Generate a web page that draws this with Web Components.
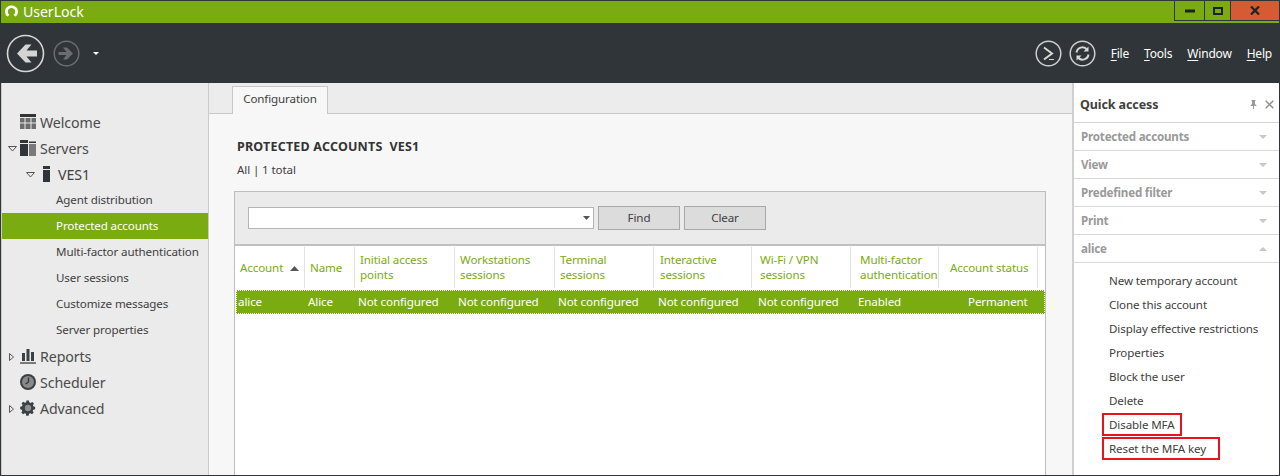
<!DOCTYPE html>
<html>
<head>
<meta charset="utf-8">
<title>UserLock</title>
<style>
  html, body { margin: 0; height: 476px; overflow: hidden; }
  body { font-family: "Noto Sans", "Open Sans", sans-serif; font-size: 11.6px; letter-spacing: -0.12px; color: #333; }
</style>
</head>
<body>
<ul-app>
  <ul-titlebar slot="top"></ul-titlebar>
  <ul-toolbar slot="top"></ul-toolbar>
  <ul-sidebar slot="left">
    <ul-node label="Welcome" depth="0" icon="welcome"></ul-node>
    <ul-node label="Servers" depth="0" icon="servers" arrow="open"></ul-node>
    <ul-node label="VES1" depth="1" icon="server" arrow="open"></ul-node>
    <ul-node label="Agent distribution" depth="2"></ul-node>
    <ul-node label="Protected accounts" depth="2" selected></ul-node>
    <ul-node label="Multi-factor authentication" depth="2"></ul-node>
    <ul-node label="User sessions" depth="2"></ul-node>
    <ul-node label="Customize messages" depth="2"></ul-node>
    <ul-node label="Server properties" depth="2"></ul-node>
    <ul-node label="Reports" depth="0" icon="reports" arrow="closed"></ul-node>
    <ul-node label="Scheduler" depth="0" icon="scheduler"></ul-node>
    <ul-node label="Advanced" depth="0" icon="advanced" arrow="closed"></ul-node>
  </ul-sidebar>
  <ul-main slot="main"></ul-main>
  <ul-quick slot="right">
    <ul-section label="Protected accounts"></ul-section>
    <ul-section label="View"></ul-section>
    <ul-section label="Predefined filter"></ul-section>
    <ul-section label="Print"></ul-section>
    <ul-section label="alice" open></ul-section>
    <ul-actions>
      <ul-action>New temporary account</ul-action>
      <ul-action>Clone this account</ul-action>
      <ul-action>Display effective restrictions</ul-action>
      <ul-action>Properties</ul-action>
      <ul-action>Block the user</ul-action>
      <ul-action>Delete</ul-action>
      <ul-action marked>Disable MFA</ul-action>
      <ul-action marked wide>Reset the MFA key</ul-action>
    </ul-actions>
  </ul-quick>
</ul-app>

<script>
const GREEN = '#7aab10';
const DARK = '#2f3538';

class Base extends HTMLElement {
    constructor() {
        super();
        this.attachShadow({ mode: 'open' });
    }
}

class UlApp extends Base {
    connectedCallback() {
        this.shadowRoot.innerHTML = `
            <style>
                :host { display: flex; flex-direction: column; width: 1280px; height: 476px; box-sizing: border-box;
                        border: 1px solid ${DARK}; background: #ebebeb; }
                .body { flex: 1; display: flex; min-height: 0; }
            </style>
            <slot name="top"></slot>
            <div class="body">
                <slot name="left"></slot>
                <slot name="main"></slot>
                <slot name="right"></slot>
            </div>`;
    }
}

class UlTitlebar extends Base {
    connectedCallback() {
        this.shadowRoot.innerHTML = `
            <style>
                :host { display: flex; height: 22px; background: ${GREEN}; color: #fff; align-items: flex-start; flex: none; }
                .logo { margin: 4px 5px 0 4px; width: 13px; height: 12px; display: block; }
                .name { font-size: 14.2px; letter-spacing: -0.1px; line-height: 21px; flex: 1; }
                .btns { display: flex; height: 19px; border: solid ${DARK}; border-width: 0 0 1px 1px; }
                .btn { display: flex; align-items: center; justify-content: center; height: 19px; box-sizing: border-box; }
                .min { width: 30px; border-right: 1px solid ${DARK}; }
                .max { width: 26px; border-right: 1px solid ${DARK}; }
                .close { width: 48px; background: #d65a33; }
            </style>
            <svg class="logo" viewBox="0 0 12 12" preserveAspectRatio="none"><path d="M2.400 11.600C.9 10.500 0 8.700 0 6.500 0 2.900 2.600.4 6 .4s6 2.500 6 6.100c0 2.200-.9 4-2.400 5.100L7.800 9.700c1-.6 1.600-1.800 1.600-3.200C9.400 4.500 7.900 3.100 6 3.100S2.600 4.500 2.600 6.500c0 1.400.6 2.600 1.600 3.200z" fill="#fff"/></svg>
            <div class="name">UserLock</div>
            <div class="btns">
                <div class="btn min"><svg width="10" height="4"><rect width="10" height="3" y="0.500" fill="#1d2224"/></svg></div>
                <div class="btn max"><svg width="10" height="8"><rect x="1" y="1" width="8" height="6" fill="none" stroke="#1d2224" stroke-width="2"/></svg></div>
                <div class="btn close"><svg width="10" height="9"><path d="M1 .5l8 8M9 .5l-8 8" stroke="#1d2224" stroke-width="2.200" fill="none"/></svg></div>
            </div>`;
    }
}

class UlToolbar extends Base {
    connectedCallback() {
        this.shadowRoot.innerHTML = `
            <style>
                :host { display: flex; align-items: center; height: 60px; background: ${DARK}; color: #fff; flex: none; }
                svg { display: block; flex: none; }
                .back { margin-left: 5px; }
                .fwd { margin-left: 8px; }
                .drop { margin-left: 13px; }
                .spacer { flex: 1; }
                .ps { margin-right: 7px; }
                .menu { display: flex; margin-left: 15px; font-size: 12px; letter-spacing: -0.2px; gap: 15px; padding-right: 7px; }
                u { text-underline-offset: 2px; }
            </style>
            <svg class="back" width="39" height="39" viewBox="0 0 39 39">
                <circle cx="19.500" cy="19.500" r="18" fill="none" stroke="#d8d8d8" stroke-width="1.600"/>
                <path d="M31 16.500H20.500l5-6h-6l-8.500 9 8.500 9h6l-5-6H31z" fill="#d4d4d4"/>
            </svg>
            <svg class="fwd" width="27" height="27" viewBox="0 0 27 27">
                <circle cx="13.500" cy="13.500" r="12.300" fill="none" stroke="#6a6e70" stroke-width="1.500"/>
                <path d="M5.500 12h8l-3.500-4.500h4l6 6-6 6h-4l3.500-4.500h-8z" fill="#6a6e70"/>
            </svg>
            <svg class="drop" width="6" height="3"><path d="M0 0h6L3 3z" fill="#fff"/></svg>
            <div class="spacer"></div>
            <svg class="ps" width="27" height="27" viewBox="0 0 27 27">
                <circle cx="13.500" cy="13.500" r="12.300" fill="none" stroke="#d0d0d0" stroke-width="1.500"/>
                <path d="M9 7.500l8 6-8 6" fill="none" stroke="#d8d8d8" stroke-width="2"/>
                <path d="M14 19.500h5" stroke="#d8d8d8" stroke-width="1"/>
            </svg>
            <svg width="27" height="27" viewBox="0 0 27 27">
                <circle cx="13.500" cy="13.500" r="12.300" fill="none" stroke="#d0d0d0" stroke-width="1.500"/>
                <path d="M7.500 12.500a6 6 0 0 1 10.500-3M19.500 14.500a6 6 0 0 1-10.500 3" fill="none" stroke="#d8d8d8" stroke-width="2"/>
                <path d="M19.500 6.500v5h-5zM7.500 20.500v-5h5z" fill="#d8d8d8"/>
            </svg>
            <div class="menu">
                <span><u>F</u>ile</span><span><u>T</u>ools</span><span><u>W</u>indow</span><span><u>H</u>elp</span>
            </div>`;
    }
}

const NODE_ICONS = {
    welcome: '<path d="M0 0h16v3H0zM0 4h4.500v4.500H0zM5.500 4h5v4.500h-5zM11.500 4H16v4.500h-4.500zM0 9.500h4.500V15H0zM5.500 9.500h5V15h-5zM11.500 9.500H16V15h-4.500z" fill="#6d6d6d"/><path d="M0 0h16v3H0z" fill="#2f3538"/>',
    servers: '<path d="M0 0h8v16H0z" fill="#2f3538"/><path d="M9 4h7v12H9z" fill="#7a7a7a"/><path d="M9 1.500h7v1.500H9z" fill="#2f3538"/><path d="M0 3h8v1H0z" fill="#ebebeb"/>',
    server: '<path d="M5 0h7v16H5z" fill="#2f3538"/><path d="M5 3h7v1H5z" fill="#ebebeb"/>',
    reports: '<path d="M2 5h3v8H2zM6.500 1h3v12h-3zM11 4h3v9h-3z" fill="#3a4043"/><path d="M0 14h16v2H0z" fill="#7a7a7a"/>',
    scheduler: '<circle cx="8" cy="8" r="8" fill="#3a4043"/><circle cx="8" cy="8" r="6" fill="#8a8a8a"/><path d="M8.500 3.500v4.500l-3 2" fill="none" stroke="#2f3538" stroke-width="1.300"/>',
    advanced: '<path d="M6.500 0h3l.5 2.200 1.700.7 1.900-1.200 2 2-1.200 1.900.7 1.700L17 7.500v3l-2.200.5-.7 1.700 1.200 1.900-2 2-1.900-1.200-1.700.7-.5 2.200h-3L6 16.100l-1.700-.7-1.900 1.200-2-2 1.200-1.900-.7-1.700L-1 10.500v-3l2.200-.5.700-1.700L.7 3.400l2-2 1.900 1.200L6.300 2z" transform="translate(1 .5) scale(.83)" fill="#3a4043"/><circle cx="8" cy="8" r="3.200" fill="#8f8f8f"/>'
};

class UlSidebar extends Base {
    connectedCallback() {
        this.shadowRoot.innerHTML = `
            <style>
                :host { display: block; width: 206px; flex: none; background: #ebebeb;
                        border-left: 1px solid #ccc; border-right: 1px solid #ccc; padding-top: 26px; }
            </style>
            <slot></slot>`;
    }
}

class UlNode extends Base {
    connectedCallback() {
        const depth = Number(this.getAttribute('depth'));
        const icon = this.getAttribute('icon');
        const arrow = this.getAttribute('arrow');
        const arrowSvg = arrow === 'open'
            ? '<path d="M.5 .5h8L4.500 5z" fill="none" stroke="#555"/>'
            : '<path d="M.5 .5v7L4.500 4z" fill="none" stroke="#555"/>';
        const iconEl = icon ? `<svg class="icon" width="17" height="16" viewBox="0 0 17 16">${NODE_ICONS[icon]}</svg>` : '';
        const arrowEl = arrow ? `<svg class="arrow ${arrow}" width="9" height="9">${arrowSvg}</svg>` : '';
        this.shadowRoot.innerHTML = `
            <style>
                :host { display: flex; align-items: center; height: 26px; color: #404040; }
                :host([selected]) { background: ${GREEN}; color: #fff; }
                .box { position: relative; display: flex; align-items: center; height: 100%; box-sizing: border-box; }
                .arrow { position: absolute; left: var(--ax); }
                .arrow.open { top: 11px; }
                .arrow.closed { top: 10px; left: 7px; }
                .icon { display: block; margin-right: 3px; flex: none; }
                .l0 { padding-left: 18px; font-size: 14.2px; letter-spacing: -0.1px; color: #4a4a4a; --ax: 6px; }
                .l1 { padding-left: 36px; font-size: 14.2px; letter-spacing: -0.1px; --ax: 24px; }
                .l1 .icon { margin-right: 3px; }
                .l2 { padding: 0 0 2px 54px; }
            </style>
            <div class="box l${depth}">${arrowEl}${iconEl}<span>${this.getAttribute('label')}</span></div>`;
    }
}

class UlMain extends Base {
    connectedCallback() {
        this.shadowRoot.innerHTML = `
            <style>
                :host { display: flex; flex-direction: column; flex: 1; min-width: 0; background: #f7f7f7; }
                .tabs { height: 31px; box-sizing: border-box; background: #ececec; border-bottom: 1px solid #c8c8c8; padding: 3px 0 0 23px; display: flex; flex: none; }
                .tab { width: 96px; height: 28px; box-sizing: border-box; border: 1px solid #c8c8c8; border-bottom: none; background: #f7f7f7;
                       line-height: 23px; text-align: center; color: #404040; }
                .content { flex: 1; display: flex; flex-direction: column; padding: 23px 26px 0 25px; min-height: 0; }
                h1 { margin: 0 0 0 3px; font-size: 12.5px; letter-spacing: 0.2px; font-weight: 700; line-height: 20px; color: #333; white-space: pre; }
                .count { margin: 3px 0 0 3px; line-height: 20px; color: #404040; }
            </style>
            <div class="tabs"><div class="tab">Configuration</div></div>
            <div class="content">
                <h1>PROTECTED ACCOUNTS  VES1</h1>
                <div class="count">All | 1 total</div>
                <ul-grid></ul-grid>
            </div>`;
    }
}

// title, value, header width, header text inset, row width
const COLUMNS = [
    ['Account', 'alice', 70, 5, 70],
    ['Name', 'Alice', 50, 5, 50],
    ['Initial access<br>points', 'Not configured', 100, 5, 100],
    ['Workstations<br>sessions', 'Not configured', 100, 5, 100],
    ['Terminal<br>sessions', 'Not configured', 99, 5, 100],
    ['Interactive<br>sessions', 'Not configured', 98, 6, 100],
    ['Wi-Fi / VPN<br>sessions', 'Not configured', 99, 8, 100],
    ['Multi-factor<br>authentication', 'Enabled', 88, 9, 110],
    ['Account status', 'Permanent', 99, 11, 99]
];

class UlGrid extends Base {
    connectedCallback() {
        const headTpl = COLUMNS.map(c => c[2] + 'px').join(' ');
        const rowTpl = COLUMNS.map(c => c[4] + 'px').join(' ');
        const heads = COLUMNS.map((c, i) => `<div class="th" style="padding-left:${c[3]}px">${c[0]}${i === 0 ? '<svg width="9" height="5"><path d="M0 5h9L4.500 0z" fill="#555"/></svg>' : ''}</div>`).join('');
        const cells = COLUMNS.map(c => `<div class="td">${c[1]}</div>`).join('');
        this.shadowRoot.innerHTML = `
            <style>
                :host { display: flex; flex-direction: column; flex: 1; margin-top: 11px; border: 1px solid #bdbdbd; border-bottom: none; background: #fff; min-height: 0; }
                .filter { height: 54px; box-sizing: border-box; background: #ebebeb; border-bottom: 2px solid #c0c0c0; padding: 15px 0 0 13px; display: flex; flex: none; }
                .combo { width: 346px; height: 22px; box-sizing: border-box; border: 1px solid #b5b5b5; background: #fff; display: flex; justify-content: flex-end; align-items: center; padding-right: 3px; }
                .btn { width: 82px; height: 24px; margin: -1px 0 0 4px; box-sizing: border-box; border: 1px solid #a8a8a8; background: #dcdcdc; line-height: 21px; text-align: center; color: #404040; }
                .head, .row { display: grid; }
                .head { height: 44px; grid-template-columns: ${headTpl}; }
                .th { border-right: 1px solid #e2e2e2; margin: 1px 0 2px; padding-top: 5px; height: 41px; box-sizing: border-box; color: #7aab10; line-height: 15px; white-space: nowrap; }
                .th:nth-child(1), .th:nth-child(2), .th:nth-child(9) { padding-top: 13px; }
                .th svg { margin: 0 0 1px 7px; }
                .row { height: 24px; grid-template-columns: ${rowTpl}; background: ${GREEN}; color: #fff; margin-left: 1px; outline: 1px dotted #fff; outline-offset: -1px; }
                .td { padding-left: 2px; line-height: 23px; white-space: nowrap; }
            </style>
            <div class="filter">
                <div class="combo"><svg width="7" height="4"><path d="M0 0h7L3.500 4z" fill="#555"/></svg></div>
                <div class="btn">Find</div>
                <div class="btn">Clear</div>
            </div>
            <div class="head">${heads}</div>
            <div class="row">${cells}</div>`;
    }
}

class UlQuick extends Base {
    connectedCallback() {
        this.shadowRoot.innerHTML = `
            <style>
                :host { display: flex; flex-direction: column; width: 205px; flex: none; background: #fff; border-left: 2px solid #d0d0d0; }
                .head { height: 40px; box-sizing: border-box; display: flex; align-items: center; padding: 3px 5px 0 6px; border-bottom: 1px solid #d4d4d4; flex: none; }
                .title { flex: 1; font-size: 12.5px; letter-spacing: -0.1px; font-weight: 700; color: #404040; }
                svg { display: block; }
                .pin { margin-right: 8px; }
            </style>
            <div class="head">
                <div class="title">Quick access</div>
                <svg class="pin" width="7" height="9"><path d="M1.500 0h4v1h-.5v3l1.500 1.500v.5H4v3H3V6H.5v-.5L2 4V1h-.5z" fill="#9a9a9a"/></svg>
                <svg width="9" height="9"><path d="M.7 .7l7.600 7.600M8.300 .7L.7 8.300" stroke="#8f8f8f" stroke-width="1.400" fill="none"/></svg>
            </div>
            <slot></slot>`;
    }
}

class UlSection extends Base {
    connectedCallback() {
        const tri = this.hasAttribute('open') ? 'M0 4h8L4 0z' : 'M0 0h8L4 4z';
        this.shadowRoot.innerHTML = `
            <style>
                :host { display: flex; align-items: center; height: 28px; box-sizing: border-box; padding: 0 12px 0 7px; border-bottom: 1px solid #d9d9d9; }
                .t { flex: 1; font-weight: 700; letter-spacing: -0.2px; color: #999; }
            </style>
            <div class="t">${this.getAttribute('label')}</div>
            <svg width="8" height="4"><path d="${tri}" fill="#c8c8c8"/></svg>`;
    }
}

class UlActions extends Base {
    connectedCallback() {
        this.shadowRoot.innerHTML = `
            <style>
                :host { display: flex; flex-direction: column; flex: 1; padding: 6px 0 0 35px; align-items: flex-start; }
            </style>
            <slot></slot>`;
    }
}

class UlAction extends Base {
    connectedCallback() {
        this.shadowRoot.innerHTML = `
            <style>
                :host { display: block; height: 24px; box-sizing: border-box; line-height: 24px; color: #404040; white-space: nowrap; }
                :host([marked]) { height: 23px; margin: 0 0 1px -7px; border: 2px solid #e8131f; padding: 0 5px; line-height: 19px; }
                :host([wide]) { padding-right: 12px; }
            </style>
            <slot></slot>`;
    }
}

customElements.define('ul-app', UlApp);
customElements.define('ul-titlebar', UlTitlebar);
customElements.define('ul-toolbar', UlToolbar);
customElements.define('ul-sidebar', UlSidebar);
customElements.define('ul-node', UlNode);
customElements.define('ul-main', UlMain);
customElements.define('ul-grid', UlGrid);
customElements.define('ul-quick', UlQuick);
customElements.define('ul-section', UlSection);
customElements.define('ul-actions', UlActions);
customElements.define('ul-action', UlAction);
</script>
</body>
</html>
